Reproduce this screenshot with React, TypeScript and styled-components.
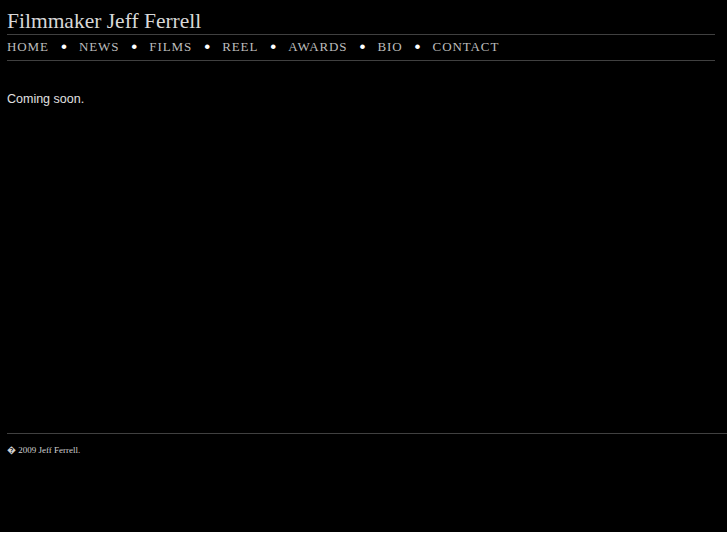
import React from 'react';
import styled, { createGlobalStyle } from 'styled-components';

const GlobalStyle = createGlobalStyle`
  html, body {
    margin: 0;
    padding: 0;
    background: #ffffff;
  }
`;

const StyledPage = styled.div`
  display: flex;
  flex-direction: column;
  height: 532px;
  background: #000000;
  padding-left: 7px;
  box-sizing: border-box;
  overflow: hidden;
`;

const StyledHeader = styled.header`
  width: 708px;
`;

const StyledTitle = styled.h1`
  margin: 0;
  padding-top: 8px;
  height: 26px;
  box-sizing: content-box;
  border-bottom: 1px solid #404040;
  font-family: "Liberation Serif", "Times New Roman", serif;
  font-weight: normal;
  font-size: 21.5px;
  line-height: 26px;
  color: #d8d8d8;
`;

const StyledNav = styled.nav`
  display: flex;
  align-items: center;
  height: 24px;
  padding-bottom: 1px;
  border-bottom: 1px solid #404040;
`;

const StyledNavLink = styled.a`
  font-family: "Liberation Serif", "Times New Roman", serif;
  font-size: 13px;
  letter-spacing: 0.9px;
  color: #bdbdbd;
  text-decoration: none;
  line-height: 24px;
`;

const StyledBullet = styled.span`
  width: 30px;
  text-align: center;
  font-family: "Liberation Sans", Arial, sans-serif;
  font-size: 17px;
  color: #ffffff;
  line-height: 24px;
`;

const StyledContent = styled.main`
  flex: 1;
  padding-top: 31px;
  font-family: "Liberation Sans", Arial, sans-serif;
  font-size: 12.5px;
  color: #e0e0e0;
`;

const StyledFooter = styled.footer`
  margin-right: -7px;
  height: 99px;
  border-top: 1px solid #404040;
  padding-top: 9px;
  box-sizing: border-box;
  font-family: "Liberation Serif", "Times New Roman", serif;
  font-size: 9px;
  color: #d0d0d0;
`;

const links = ['HOME', 'NEWS', 'FILMS', 'REEL', 'AWARDS', 'BIO', 'CONTACT'];

export default function App() {
    return (
        <>
            <GlobalStyle />
            <StyledPage>
                <StyledHeader>
                    <StyledTitle>Filmmaker Jeff Ferrell</StyledTitle>
                    <StyledNav>
                        {links.map((link, i) => (
                            <React.Fragment key={link}>
                                {i > 0 && <StyledBullet>•</StyledBullet>}
                                <StyledNavLink href="#">{link}</StyledNavLink>
                            </React.Fragment>
                        ))}
                    </StyledNav>
                </StyledHeader>
                <StyledContent>Coming soon.</StyledContent>
                <StyledFooter>{'\uFFFD'} 2009 Jeff Ferrell.</StyledFooter>
            </StyledPage>
        </>
    );
}
